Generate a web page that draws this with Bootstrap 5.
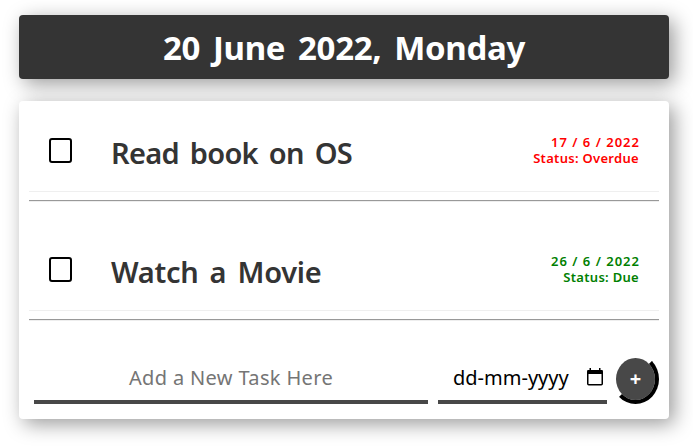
<!DOCTYPE html>
<html lang="en">
<head>
<meta charset="utf-8">
<meta name="viewport" content="width=device-width, initial-scale=1">
<title>To-do list</title>
<link href="https://cdn.jsdelivr.net/npm/bootstrap@5.3.0/dist/css/bootstrap.min.css" rel="stylesheet">
<style>
  body { background: #fff; font-family: "Noto Sans", sans-serif; }
  .todo-page { height: 448px; padding: 15px 24px 0 19px; gap: 22px; overflow: hidden; }
  .panel { border-radius: 4px; box-shadow: 5px 5px 20px rgba(0, 0, 0, .4); }
  .date-bar { height: 64px; background: #343434; }
  .date-title { padding-top: 1px; font-size: 33px; font-weight: 700; line-height: 64px; letter-spacing: -.3px; word-spacing: 4.500px; }
  .todo-list { height: 318px; padding: 0 10px; }
  .todo-item { height: 91px; padding: 0 20px; border-bottom: 1px solid #efefef; }
  .tick { width: 23px; height: 25px; margin-top: 37px; border: 2px solid #000; border-radius: 3px; background: #fff; appearance: none; }
  .task-name { margin: 32px 0 0 39px; font-size: 29px; font-weight: 600; line-height: 40px; color: #343434; letter-spacing: -.7px; word-spacing: 4px; }
  .todo-item ~ .todo-item .task-name { letter-spacing: -.3px; }
  .task-meta { margin: 33px -1px 0 0; font-size: 13px; font-weight: 600; line-height: 16px; }
  .meta-date { letter-spacing: 1px; }
  .meta-status { letter-spacing: .3px; padding-right: 1px; }
  .is-overdue { color: #f00; }
  .is-due { color: green; }
  .rule { height: 2px; margin: 8px 0 18px; border-top: 1px solid #999; border-bottom: 1px solid #eee; }
  .add-row { height: 50px; margin-top: 33px; padding-left: 5px; }
  .line-input { height: 50px; border: 0; border-bottom: 4px solid #484848; background: transparent; outline: 0; font-size: 20px; }
  .task-input { width: 394px; padding: 0; text-align: center; letter-spacing: .35px; }
  .task-input::placeholder { color: #757575; opacity: 1; }
  .date-box { width: 169px; margin-left: 10px; padding: 2px 4px 0 15px; }
  .date-field { width: 125px; border: 0; padding: 0; outline: 0; background: transparent; }
  .date-field::placeholder { color: #000; opacity: 1; }
  .calendar { margin-top: -2px; }
  .add-btn { width: 47px; height: 50px; margin-left: 5px; padding: 0; border: 4px solid; border-color: transparent #000 #000 transparent; border-radius: 50%; background: #484848; background-clip: padding-box; color: #fff; font-size: 20px; font-weight: 700; line-height: 42px; }
</style>
</head>
<body>
<main class="todo-page d-flex flex-column">
  <header class="panel date-bar text-center text-white">
    <h1 class="date-title m-0">20 June 2022, Monday</h1>
  </header>
  <section class="panel todo-list bg-white flex-shrink-0">
    <div class="todo-item d-flex align-items-start">
      <input class="tick flex-shrink-0" type="checkbox" aria-label="Read book on OS">
      <h2 class="task-name mb-0">Read book on OS</h2>
      <div class="task-meta is-overdue ms-auto text-end">
        <div class="meta-date">17 / 6 / 2022</div>
        <div class="meta-status">Status: Overdue</div>
      </div>
    </div>
    <div class="rule"></div>
    <div class="todo-item d-flex align-items-start">
      <input class="tick flex-shrink-0" type="checkbox" aria-label="Watch a Movie">
      <h2 class="task-name mb-0">Watch a Movie</h2>
      <div class="task-meta is-due ms-auto text-end">
        <div class="meta-date">26 / 6 / 2022</div>
        <div class="meta-status">Status: Due</div>
      </div>
    </div>
    <div class="rule mb-0"></div>
    <form class="add-row d-flex">
      <input class="line-input task-input" type="text" placeholder="Add a New Task Here">
      <div class="line-input date-box d-flex align-items-center flex-shrink-0">
        <input class="date-field" type="text" placeholder="dd-mm-yyyy" aria-label="Due date">
        <svg class="calendar ms-auto" width="16" height="18" viewBox="0 0 16 18" aria-hidden="true">
          <rect x=".75" y="2.750" width="14.500" height="14" rx="1" fill="none" stroke="#000" stroke-width="1.500"/>
          <path d="M.5 2h15v4H.5zM2.500 0H4v3H2.500zM12 0h1.500v3H12z"/>
        </svg>
      </div>
      <button class="add-btn flex-shrink-0" type="button" aria-label="Add task">+</button>
    </form>
  </section>
</main>
<script src="https://cdn.jsdelivr.net/npm/bootstrap@5.3.0/dist/js/bootstrap.bundle.min.js"></script>
</body>
</html>
